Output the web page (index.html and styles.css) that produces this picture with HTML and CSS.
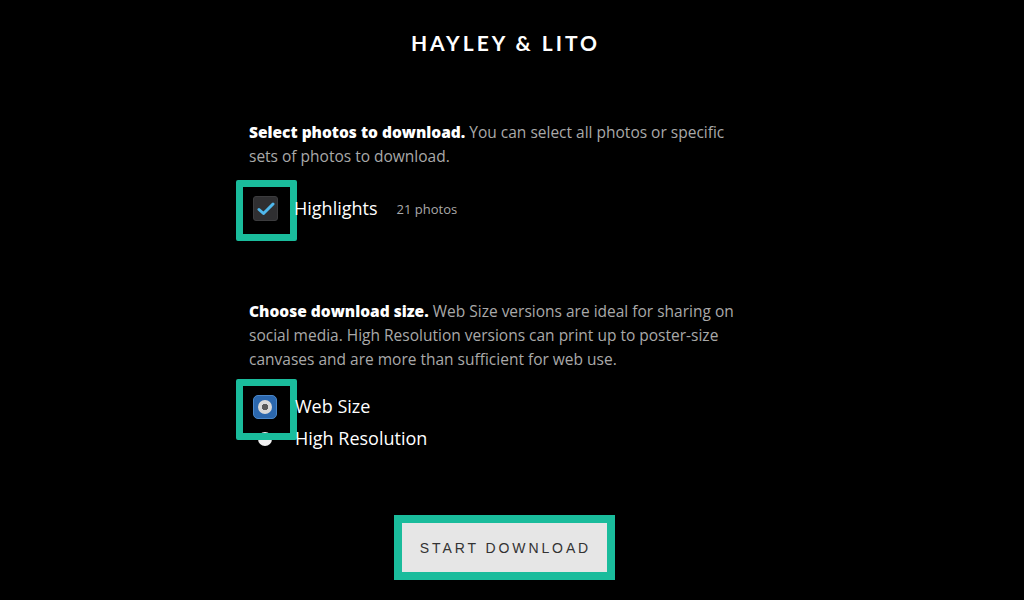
FILE: index.html
```html
<!DOCTYPE html>
<html>
<head>
<meta charset="utf-8">
<link rel="stylesheet" href="styles.css">
</head>
<body>
<div class="page">
  <h1 class="title">HAYLEY &amp; LITO</h1>
  <section class="column">
    <p class="intro"><strong>Select photos to download.</strong> You can select all photos or specific sets of photos to download.</p>
    <div class="option-row check-row">
      <span class="checkbox highlight">
        <svg width="18" height="14" viewBox="0 0 18 14"><path d="M2 7.5 L6.5 11.5 L16 2" fill="none" stroke="#4fb8ec" stroke-width="3" stroke-linecap="round" stroke-linejoin="round"/></svg>
      </span>
      <span class="label">Highlights</span>
      <span class="count">21 photos</span>
    </div>

    <p class="intro second"><strong>Choose download size.</strong> Web Size versions are ideal for sharing on social media. High Resolution versions can print up to poster-size canvases and are more than sufficient for web use.</p>
    <div class="radios">
      <div class="option-row radio-row">
        <span class="radio-on highlight"><span class="radio-dot"></span></span>
        <span class="label">Web Size</span>
      </div>
      <div class="option-row radio-row">
        <span class="radio-off-wrap"><span class="radio-off"></span></span>
        <span class="label">High Resolution</span>
      </div>
    </div>
  </section>
  <div class="actions">
    <button class="start">START DOWNLOAD</button>
  </div>
</div>
</body>
</html>
```

FILE: styles.css
```css
html, body {
  margin: 0;
  background: #000;
}
body {
  font-family: "Open Sans", "Liberation Sans", sans-serif;
  color: #fff;
  width: 1024px;
  height: 600px;
  overflow: hidden;
}
.page {
  width: 1008px;
  padding-top: 31px;
}
.title {
  margin: 0;
  text-align: center;
  font-family: "Lato", "Liberation Sans", sans-serif;
  font-size: 21px;
  line-height: 24px;
  font-weight: 700;
  letter-spacing: 3px;
  color: #fff;
  padding-left: 3px;
}
.column {
  width: 498px;
  padding-right: 12px;
  margin: 65px auto 0;
}
.intro {
  margin: 0;
  font-size: 15.5px;
  line-height: 24px;
  color: #a9a9a9;
}
.intro strong {
  color: #fff;
  font-weight: 800;
}
.intro.second {
  margin-top: 78px;
}
.option-row {
  display: flex;
  align-items: center;
}
.check-row {
  margin-top: 28px;
  height: 25px;
  padding-left: 4px;
}
.checkbox {
  position: relative;
  width: 25px;
  height: 25px;
  box-sizing: border-box;
  border-radius: 3px;
  background: #2f2f31;
  border: 1px solid #3c3c3e;
  display: flex;
  align-items: center;
  justify-content: center;
}
.highlight::after {
  content: "";
  position: absolute;
  left: -18px;
  top: -17px;
  width: 61px;
  height: 61px;
  box-sizing: border-box;
  border: 7px solid #1abc9c;
  border-radius: 2px;
}
.label {
  margin-left: 16px;
  font-size: 18px;
  line-height: 24px;
  color: #fff;
  position: relative;
  top: -1px;
}
.count {
  margin-left: 19px;
  font-size: 13px;
  color: #a9a9a9;
}
.radios {
  margin-top: 24px;
  display: flex;
  flex-direction: column;
  gap: 8px;
  padding-left: 4px;
}
.radio-row {
  height: 24px;
}
.radio-on {
  position: relative;
  width: 24px;
  height: 24px;
  box-sizing: border-box;
  border-radius: 5px;
  background: #2b67ad;
  border: 1px solid #4a86c8;
  display: flex;
  align-items: center;
  justify-content: center;
}
.radio-dot {
  width: 14px;
  height: 14px;
  border-radius: 50%;
  background: radial-gradient(circle, #5a5a5a 0 3px, #d9d9d9 3.5px);
}
.radio-off-wrap {
  width: 24px;
  height: 24px;
  display: flex;
  align-items: center;
  justify-content: center;
}
.radio-off {
  width: 14px;
  height: 14px;
  border-radius: 50%;
  background: #f2f2f2;
}
.radio-row .label {
  margin-left: 18px;
}
.actions {
  display: flex;
  justify-content: center;
  margin-top: 72px;
}
.start {
  width: 205px;
  height: 49px;
  background: #e6e6e6;
  border: none;
  outline: 8px solid #1abc9c;
  border-radius: 0;
  font-family: "Liberation Sans", Arial, sans-serif;
  font-size: 14px;
  letter-spacing: 2.9px;
  color: #333;
  padding: 0 0 0 3px;
}
```
